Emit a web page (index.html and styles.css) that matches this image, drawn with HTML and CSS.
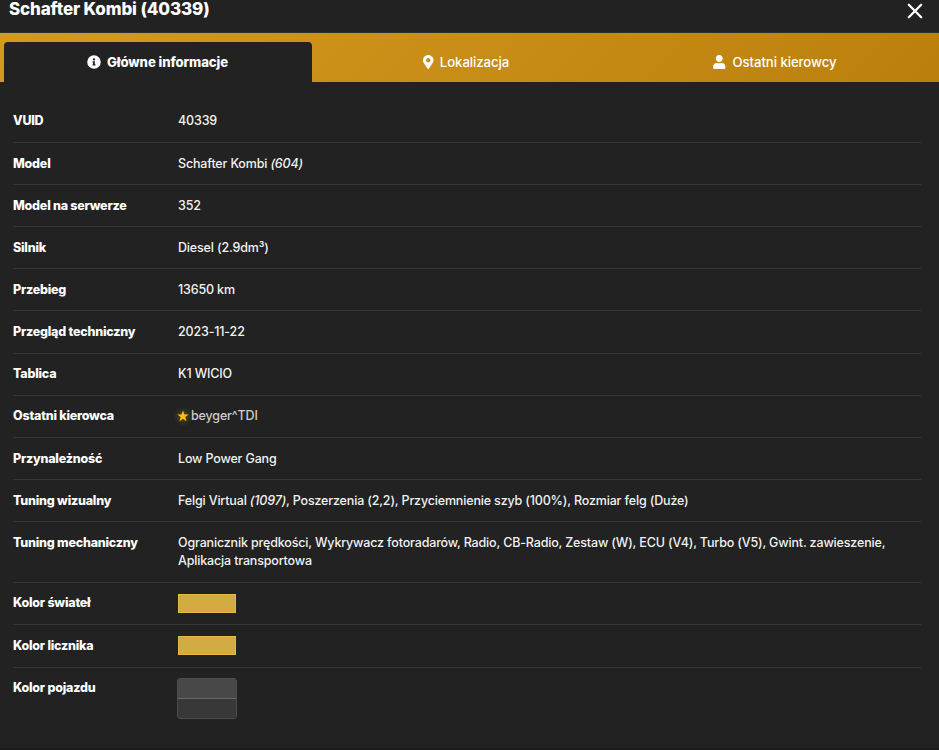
FILE: index.html
```
<!DOCTYPE html>
<html lang="pl">
<head>
  <meta charset="utf-8">
  <meta name="viewport" content="width=device-width, initial-scale=1">
  <title>Schafter Kombi (40339)</title>
  <link rel="stylesheet" href="styles.css">
</head>
<body>
  <div class="modal">
    <header class="modal-header">
      <h1 class="modal-title">Schafter Kombi (40339)</h1>
      <button class="modal-close" type="button" aria-label="Zamknij">
        <svg width="16" height="16" viewBox="0 0 16 16"><path d="M1.8 1.8l12.4 12.4M14.2 1.8L1.8 14.2" fill="none" stroke="#fff" stroke-width="2.3" stroke-linecap="round"/></svg>
      </button>
    </header>

    <nav class="tabs">
      <a class="tab active">
        <svg class="icon" width="14" height="14" viewBox="0 0 512 512"><path fill="currentColor" fill-rule="evenodd" d="M256 8a248 248 0 1 0 0 496 248 248 0 0 0 0-496zm0 110a42 42 0 1 1 0 84 42 42 0 0 1 0-84zm56 254a12 12 0 0 1-12 12h-88a12 12 0 0 1-12-12v-24a12 12 0 0 1 12-12h12v-64h-12a12 12 0 0 1-12-12v-24a12 12 0 0 1 12-12h64a12 12 0 0 1 12 12v100h12a12 12 0 0 1 12 12z"/></svg>
        <span>Główne informacje</span>
      </a>
      <a class="tab">
        <svg class="icon" width="10.5" height="14" viewBox="0 0 384 512"><path fill="currentColor" d="M172.300 501.700C27 291 0 269.400 0 192 0 86 86 0 192 0s192 86 192 192c0 77.400-27 99-172.300 309.700-9.500 13.800-29.900 13.800-39.400 0zM192 272c44.200 0 80-35.800 80-80s-35.800-80-80-80-80 35.800-80 80 35.800 80 80 80z"/></svg>
        <span>Lokalizacja</span>
      </a>
      <a class="tab">
        <svg class="icon" width="12.500" height="14" viewBox="0 0 448 512"><path fill="currentColor" d="M224 256c70.700 0 128-57.300 128-128S294.700 0 224 0 96 57.300 96 128s57.300 128 128 128zm89.600 32h-16.700c-22.200 10.200-46.900 16-72.900 16s-50.600-5.800-72.900-16h-16.700C60.200 288 0 348.200 0 422.400V464c0 26.500 21.500 48 48 48h352c26.500 0 48-21.500 48-48v-41.600c0-74.200-60.200-134.400-134.400-134.400z"/></svg>
        <span>Ostatni kierowcy</span>
      </a>
    </nav>

    <dl class="info">
      <div class="row"><dt>VUID</dt><dd>40339</dd></div>
      <div class="row"><dt>Model</dt><dd>Schafter Kombi <i>(604)</i></dd></div>
      <div class="row"><dt>Model na serwerze</dt><dd>352</dd></div>
      <div class="row"><dt>Silnik</dt><dd>Diesel (2.9dm³)</dd></div>
      <div class="row"><dt>Przebieg</dt><dd>13650 km</dd></div>
      <div class="row"><dt>Przegląd techniczny</dt><dd>2023-11-22</dd></div>
      <div class="row"><dt>Tablica</dt><dd>K1 WICIO</dd></div>
      <div class="row">
        <dt>Ostatni kierowca</dt>
        <dd class="driver">
          <svg class="star" width="12" height="12" viewBox="0 0 24 24"><path fill="#ffc107" d="M12 .8l2.800 8h8.600l-6.900 5.200 2.600 8.400L12 17.300l-7.100 5.100L7.500 14 .6 8.800h8.600z"/></svg>
          <span>beyger^TDI</span>
        </dd>
      </div>
      <div class="row"><dt>Przynależność</dt><dd>Low Power Gang</dd></div>
      <div class="row"><dt>Tuning wizualny</dt><dd>Felgi Virtual <i>(1097)</i>, Poszerzenia (2,2), Przyciemnienie szyb (100%), Rozmiar felg (Duże)</dd></div>
      <div class="row"><dt>Tuning mechaniczny</dt><dd>Ogranicznik prędkości, Wykrywacz fotoradarów, Radio, CB-Radio, Zestaw (W), ECU (V4), Turbo (V5), Gwint. zawieszenie, Aplikacja transportowa</dd></div>
      <div class="row"><dt>Kolor świateł</dt><dd><div class="swatch"></div></dd></div>
      <div class="row"><dt>Kolor licznika</dt><dd><div class="swatch"></div></dd></div>
      <div class="row">
        <dt>Kolor pojazdu</dt>
        <dd>
          <div class="paint">
            <div class="paint-top"></div>
            <div class="paint-bottom"></div>
          </div>
        </dd>
      </div>
    </dl>
  </div>
</body>
</html>
```

FILE: styles.css
```
* {
  box-sizing: border-box;
}

body {
  margin: 0;
  background: #222;
  color: #f1f1f1;
  font-family: Inter, "Liberation Sans", sans-serif;
  font-size: 12.5px;
  line-height: 18.4px;
  letter-spacing: -0.16px;
  overflow: hidden;
}

.modal {
  height: 750px;
  border-bottom: 2px solid #1d1b1c;
}

.modal-header {
  display: flex;
  justify-content: space-between;
  align-items: flex-start;
  height: 33px;
  padding: 0 16px 0 9px;
  border-bottom: 1px solid #2d2e32;
}

.modal-title {
  margin: 0;
  color: #fff;
  font-size: 17px;
  font-weight: 800;
  line-height: 19px;
  letter-spacing: -0.13px;
}

.modal-close {
  display: flex;
  margin-top: 3px;
  padding: 0;
  border: 0;
  background: none;
}

/* tabs */
.tabs {
  display: flex;
  height: 49px;
  padding: 9px 4px 0;
  background: linear-gradient(135deg, #d49a20, #bb800c);
}

.tab {
  display: flex;
  flex: 1 1 0;
  align-items: center;
  justify-content: center;
  gap: 6px;
  padding: 1px 0 0 0;
  color: #fff;
  font-size: 13.2px;
  font-weight: 500;
  letter-spacing: -0.08px;
  border-radius: 4px 4px 0 0;
}

.tab:last-child {
  gap: 7px;
  padding-right: 6px;
}

.tab.active {
  flex: 0 0 308px;
  padding-right: 1px;
  background: #222;
  font-weight: 800;
  letter-spacing: -0.1px;
}

.icon {
  flex: none;
  margin-top: -1px;
}

/* details */
.info {
  margin: 0;
  padding: 18.7px 18px 0 13px;
}

.row {
  display: flex;
  padding: 11.7px 0 11.06px;
  border-bottom: 1px solid #363636;
}

.row:last-child {
  border-bottom: 0;
}

dt {
  flex: 0 0 165px;
  color: #fff;
  font-weight: 800;
  letter-spacing: -0.22px;
}

dd {
  flex: 1;
  margin: 0;
  font-weight: 500;
}

.driver {
  display: flex;
  align-items: center;
  gap: 2px;
  color: #ccc;
}

.star {
  margin: -1px 0 0 -1px;
  filter: drop-shadow(0 0 3px #ffc10799);
}

.swatch {
  width: 58px;
  height: 19.4px;
  margin-top: -0.7px;
  background: #d4ab42;
  border: 1px solid #e6b840;
}

.paint {
  width: 60px;
  height: 41px;
  margin: -1.2px 0 0 -1px;
  border: 1px solid #4c4c4c;
  border-radius: 3px;
  overflow: hidden;
}

.paint-top {
  height: 20px;
  background: #484848;
  border-bottom: 1px solid #686868;
}

.paint-bottom {
  height: 19px;
  background: #383838;
}
```
